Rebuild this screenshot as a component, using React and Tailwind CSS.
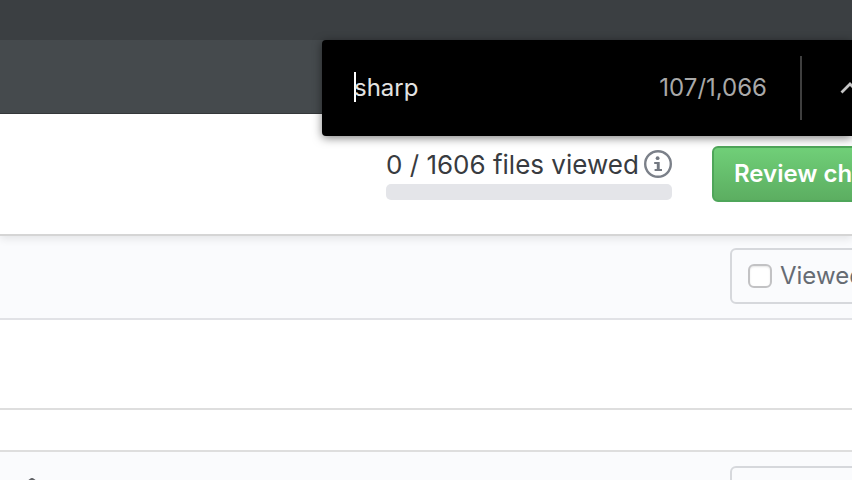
import React from "react";

function FindBar() {
  return (
    <form
      role="search"
      onSubmit={(e) => e.preventDefault()}
      className="absolute top-10 right-0 z-20 flex h-24 w-[530px] items-center overflow-hidden rounded-l-[4px] bg-black pl-8 shadow-[0_2px_10px_rgba(0,0,0,0.5)]"
    >
      <span className="mb-[2px] h-[30px] w-[2px] shrink-0 bg-white" />
      <input
        type="text"
        aria-label="Find in page"
        defaultValue="sharp"
        className="-ml-[2px] h-10 min-w-0 flex-1 bg-transparent pb-[2px] text-[24px] text-[#e3e3e3] outline-none"
      />
      <span className="text-[24px] whitespace-nowrap text-[#a9a9a9]">107/1,066</span>
      <span className="ml-[33px] h-16 w-[2px] shrink-0 bg-[#3f3f3f]" />
      <button type="button" aria-label="Previous match" className="h-16 w-[50px] shrink-0 overflow-hidden pl-[38px]">
        <svg width="20" height="12" viewBox="0 0 20 12" fill="none" className="max-w-none">
          <path d="M1.5 10.5 L10 2 L18.5 10.5" stroke="#c4c4c4" strokeWidth="2.8" />
        </svg>
      </button>
    </form>
  );
}

function InfoIcon() {
  return (
    <svg width="28" height="28" viewBox="0 0 28 28" fill="none" aria-label="More information">
      <circle cx="14" cy="14" r="12.8" stroke="#7b8089" strokeWidth="2.4" />
      <circle cx="13.6" cy="8.2" r="1.9" fill="#747982" />
      <path d="M10.2 12 H15.7 V19 H18 V21 H10.6 V19 H12.8 V14 H10.2 Z" fill="#747982" />
    </svg>
  );
}

function ReviewToolbar() {
  return (
    <section className="relative z-10 flex h-[122px] items-start justify-end border-b-2 border-[#d5d5d5] bg-white pt-8 shadow-[0_3px_8px_rgba(0,0,0,0.09)]">
      <div className="mr-10 mt-[3px] flex w-[286px] flex-col">
        <div className="flex h-[30px] items-center justify-between whitespace-nowrap text-[26px] text-[#383b40]">
          <span>0 / 1606 files viewed</span>
          <InfoIcon />
        </div>
        <div
          role="progressbar"
          aria-label="Files viewed"
          aria-valuemin={0}
          aria-valuemax={1606}
          aria-valuenow={0}
          className="mt-[5px] h-4 rounded-[5px] bg-[#e4e5e9]"
        />
      </div>
      <button
        type="button"
        className="-mr-24 h-14 w-[236px] shrink-0 rounded-[6px] border-2 border-[#4fa65a] bg-linear-to-b from-[#70cf78] to-[#5cae61] pl-5 text-left text-[24px] font-semibold whitespace-nowrap text-white"
      >
        Review changes
      </button>
    </section>
  );
}

function FileHeader({ children }) {
  return (
    <header className="flex h-[86px] items-start justify-between border-b-2 border-[#e1e2e6] bg-[#fafbfd]">
      <div className="pl-5">{children}</div>
      <label className="mt-[14px] -mr-6 flex h-14 w-[146px] shrink-0 items-center gap-2 rounded-[6px] border-2 border-[#d6d8dc] pl-4 text-[24px] whitespace-nowrap text-[#666b73]">
        <input
          type="checkbox"
          className="size-6 shrink-0 appearance-none rounded-[6px] border-2 border-[#c2c2c4] bg-white shadow-[inset_0_1px_2px_rgba(0,0,0,0.1)]"
        />
        Viewed
      </label>
    </header>
  );
}

export default function App() {
  return (
    <div className="relative h-screen overflow-hidden bg-white font-['Inter','Liberation_Sans',sans-serif]">
      <div className="h-10 bg-[#3b3f42]" />
      <div className="h-[74px] border-b border-[#35383a] bg-[#454a4d]" />
      <FindBar />
      <ReviewToolbar />
      <main className="-mt-[2px]">
        <article className="border-b-2 border-[#dedede]">
          <FileHeader />
          <div className="h-[88px]" />
        </article>
        <article className="mt-10 border-t-2 border-[#dedede]">
          <FileHeader>
            <button type="button" aria-label="Expand file" className="mt-[26px] block">
              <svg width="24" height="28" viewBox="0 0 24 28" fill="none">
                <path d="M6 6 L12 2 L18 6" stroke="#606266" strokeWidth="4" strokeLinejoin="round" />
                <path d="M12 4 V24 M6 21 L12 26 L18 21" stroke="#606266" strokeWidth="2" />
              </svg>
            </button>
          </FileHeader>
        </article>
      </main>
    </div>
  );
}
